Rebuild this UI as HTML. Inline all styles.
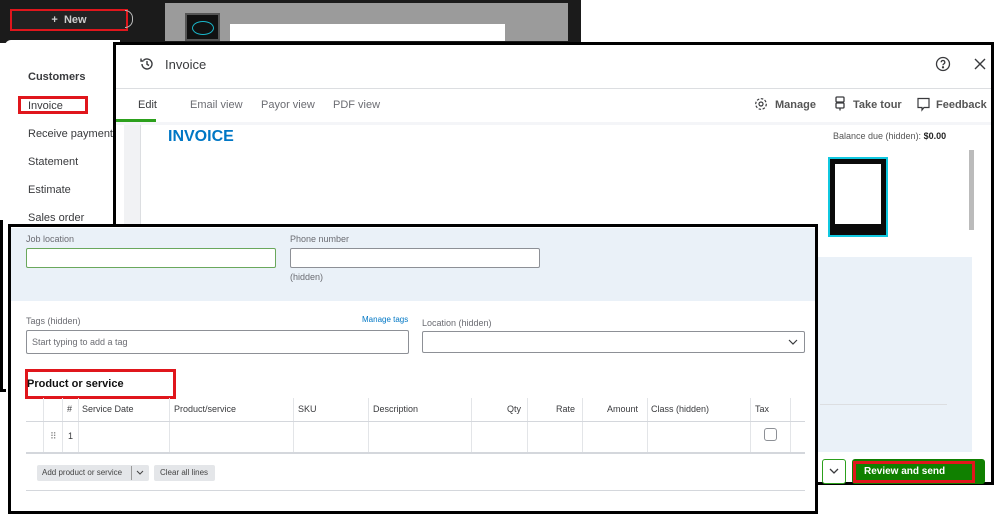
<!DOCTYPE html>
<html><head><style>
*{box-sizing:border-box;margin:0;padding:0}
body{width:999px;height:514px;position:relative;overflow:hidden;background:#fff;font-family:"Liberation Sans",sans-serif;color:#393a3d}
.a{position:absolute}
.lbl{font-size:9px;color:#6b6c72}
.inp{position:absolute;border:1px solid #8d9096;border-radius:2px;background:#fff}
.th{position:absolute;top:404px;font-size:9px;color:#393a3d}
.vl{position:absolute;width:1px;background:#e3e5e8}
</style></head><body>
<!-- top dark frame -->
<div class="a" style="left:0;top:0;width:581px;height:43px;background:#1b1b1b"></div>
<div class="a" style="left:165px;top:3px;width:403px;height:38px;background:#9b9b9b"></div>
<div class="a" style="left:185px;top:13px;width:35px;height:28px;background:#111;border:2px solid #555"><div class="a" style="left:5px;top:6px;width:22px;height:14px;border:1px solid #19b5c8;border-radius:50%"></div></div>
<div class="a" style="left:230px;top:24px;width:275px;height:17px;background:#fff"></div>
<div class="a" style="left:10px;top:9px;width:118px;height:22px;border:2px solid #e0161c;color:#ccc;font-size:11px;text-align:center;line-height:18px;font-weight:bold;background:#222">+&nbsp;&nbsp;New</div>
<div class="a" style="left:125px;top:10px;width:8px;height:18px;border:1px solid #bbb;border-left:none;border-radius:0 9px 9px 0"></div>
<!-- sidebar -->
<div class="a" style="left:5px;top:40px;width:115px;height:190px;background:#fff;border-radius:6px 0 0 0"></div>
<div class="a" style="left:0;top:220px;width:6px;height:172px;border-left:3px solid #000;border-bottom:3px solid #000"></div>
<div class="a" style="left:28px;top:71px;font-size:11px;font-weight:bold">Customers</div>
<div class="a" style="left:18px;top:96px;width:70px;height:18px;border:3px solid #e0161c"></div>
<div class="a" style="left:28px;top:100px;font-size:11px">Invoice</div>
<div class="a" style="left:28px;top:128px;font-size:11px">Receive payment</div>
<div class="a" style="left:28px;top:156px;font-size:11px">Statement</div>
<div class="a" style="left:28px;top:184px;font-size:11px">Estimate</div>
<div class="a" style="left:28px;top:212px;font-size:11px">Sales order</div>
<!-- modal -->
<div class="a" style="left:113px;top:42px;width:881px;height:443px;background:#fff;border:3px solid #000"></div>
<div class="a" style="left:116px;top:88px;width:875px;height:1px;background:#dcdee1"></div>
<svg class="a" style="left:139px;top:56px" width="16" height="16" viewBox="0 0 16 16" fill="none" stroke="#393a3d" stroke-width="1.4"><path d="M3 8a5 5 0 1 0 1.5-3.6M2 2.5v2.5h2.5M8 5v3.2l2 1.3"/></svg>
<div class="a" style="left:165px;top:57px;font-size:13px;color:#393a3d">Invoice</div>
<svg class="a" style="left:935px;top:56px" width="16" height="16" viewBox="0 0 16 16" fill="none" stroke="#393a3d" stroke-width="1.3"><circle cx="8" cy="8" r="6.5"/><path d="M6.2 6.3a1.8 1.8 0 1 1 2.6 1.6c-.6.3-.8.7-.8 1.3"/><circle cx="8" cy="11.3" r=".5" fill="#393a3d"/></svg>
<svg class="a" style="left:974px;top:58px" width="12" height="12" viewBox="0 0 12 12" stroke="#393a3d" stroke-width="1.4"><path d="M1 1l10 10M11 1L1 11"/></svg>
<div class="a" style="left:138px;top:99px;font-size:11px">Edit</div>
<div class="a" style="left:190px;top:99px;font-size:11px;color:#6b6c72">Email view</div>
<div class="a" style="left:261px;top:99px;font-size:11px;color:#6b6c72">Payor view</div>
<div class="a" style="left:333px;top:99px;font-size:11px;color:#6b6c72">PDF view</div>
<div class="a" style="left:116px;top:119px;width:40px;height:3px;background:#2ca01c"></div>
<div class="a" style="left:116px;top:122px;width:875px;height:3px;background:#f4f5f8"></div>
<svg class="a" style="left:754px;top:97px" width="14" height="14" viewBox="0 0 14 14" fill="none" stroke="#393a3d" stroke-width="1.2"><circle cx="7" cy="7" r="2"/><circle cx="7" cy="7" r="5.3" stroke-dasharray="2.5 1.6"/></svg>
<div class="a" style="left:775px;top:99px;font-size:11px;font-weight:bold;color:#555">Manage</div>
<svg class="a" style="left:834px;top:96px" width="12" height="15" viewBox="0 0 12 15" fill="none" stroke="#393a3d" stroke-width="1.3"><rect x="2" y="1" width="8" height="5" rx="1"/><rect x="2" y="7" width="8" height="5" rx="1"/><path d="M6 12v2.5"/></svg>
<div class="a" style="left:853px;top:99px;font-size:11px;font-weight:bold;color:#555">Take tour</div>
<svg class="a" style="left:916px;top:97px" width="15" height="15" viewBox="0 0 15 15" fill="none" stroke="#393a3d" stroke-width="1.2"><path d="M2 1.5h11v9H8l-2 2.5v-2.5H2z"/></svg>
<div class="a" style="left:936px;top:99px;font-size:11px;font-weight:bold;color:#555">Feedback</div>
<div class="a" style="left:124px;top:125px;width:17px;height:100px;background:#f1f2f4;border-right:1px solid #dcdee1"></div>
<div class="a" style="left:168px;top:128px;font-size:16px;font-weight:bold;color:#0077c5">INVOICE</div>
<div class="a" style="left:833px;top:131px;font-size:9px;color:#555">Balance due (hidden): <b style="color:#222">$0.00</b></div>
<div class="a" style="left:828px;top:157px;width:60px;height:80px;background:#0a0a0a;border:2px solid #10c8e0"><div class="a" style="left:5px;top:5px;width:46px;height:60px;background:#fff"></div></div>
<div class="a" style="left:969px;top:150px;width:5px;height:80px;background:#bbb"></div>
<div class="a" style="left:816px;top:257px;width:156px;height:195px;background:#eaf1f8"></div>
<div class="a" style="left:820px;top:404px;width:127px;height:1px;background:#dcdee1"></div>
<div class="a" style="left:822px;top:459px;width:24px;height:25px;border:1px solid #2ca01c;border-radius:3px;background:#fff"></div>
<svg class="a" style="left:829px;top:468px" width="10" height="7" viewBox="0 0 10 7" fill="none" stroke="#393a3d" stroke-width="1.3"><path d="M1 1l4 4 4-4"/></svg>
<div class="a" style="left:852px;top:459px;width:133px;height:25px;background:#108000;border-radius:3px"></div>
<div class="a" style="left:853px;top:461px;width:122px;height:22px;border:3px solid #e0161c"></div>
<div class="a" style="left:864px;top:466px;font-size:10px;font-weight:bold;color:#fff">Review and send</div>
<!-- inner box -->
<div class="a" style="left:8px;top:224px;width:810px;height:290px;background:#fff;border:3px solid #000"></div>
<div class="a" style="left:11px;top:228px;width:804px;height:73px;background:#eaf1f8"></div>
<div class="a lbl" style="left:26px;top:234px">Job location</div>
<div class="inp" style="left:26px;top:248px;width:250px;height:20px;border-color:#6aa85c"></div>
<div class="a lbl" style="left:290px;top:234px">Phone number</div>
<div class="inp" style="left:290px;top:248px;width:250px;height:20px"></div>
<div class="a lbl" style="left:290px;top:272px">(hidden)</div>
<div class="a lbl" style="left:26px;top:316px">Tags (hidden)</div>
<div class="a" style="left:362px;top:315px;font-size:8px;color:#0077c5">Manage tags</div>
<div class="inp" style="left:26px;top:330px;width:383px;height:24px"></div>
<div class="a lbl" style="left:32px;top:337px">Start typing to add a tag</div>
<div class="a lbl" style="left:422px;top:318px">Location (hidden)</div>
<div class="inp" style="left:422px;top:331px;width:383px;height:22px"></div>
<svg class="a" style="left:788px;top:339px" width="10" height="7" viewBox="0 0 10 7" fill="none" stroke="#393a3d" stroke-width="1.2"><path d="M1 1l4 4 4-4"/></svg>
<div class="a" style="left:25px;top:369px;width:151px;height:30px;border:3px solid #e0161c"></div>
<div class="a" style="left:27px;top:378px;font-size:11px;font-weight:bold;color:#111">Product or service</div>
<div class="vl" style="left:43px;top:398px;height:55px"></div>
<div class="vl" style="left:62px;top:398px;height:55px"></div>
<div class="vl" style="left:78px;top:398px;height:55px"></div>
<div class="vl" style="left:169px;top:398px;height:55px"></div>
<div class="vl" style="left:293px;top:398px;height:55px"></div>
<div class="vl" style="left:368px;top:398px;height:55px"></div>
<div class="vl" style="left:471px;top:398px;height:55px"></div>
<div class="vl" style="left:527px;top:398px;height:55px"></div>
<div class="vl" style="left:582px;top:398px;height:55px"></div>
<div class="vl" style="left:647px;top:398px;height:55px"></div>
<div class="vl" style="left:750px;top:398px;height:55px"></div>
<div class="vl" style="left:790px;top:398px;height:55px"></div>
<div class="th" style="left:67px">#</div>
<div class="th" style="left:82px">Service Date</div>
<div class="th" style="left:174px">Product/service</div>
<div class="th" style="left:298px">SKU</div>
<div class="th" style="left:373px">Description</div>
<div class="th" style="left:507px">Qty</div>
<div class="th" style="left:556px">Rate</div>
<div class="th" style="left:607px">Amount</div>
<div class="th" style="left:651px">Class (hidden)</div>
<div class="th" style="left:755px">Tax</div>
<div class="a" style="left:26px;top:421px;width:779px;height:1px;background:#d4d7dc"></div>
<div class="a" style="left:50px;top:431px;font-size:9px;color:#888">⠿</div>
<div class="a" style="left:68px;top:431px;font-size:9px">1</div>
<div class="a" style="left:764px;top:428px;width:13px;height:13px;border:1px solid #8d9096;border-radius:3px"></div>
<div class="a" style="left:26px;top:452px;width:779px;height:2px;background:#d4d7dc"></div>
<div class="a" style="left:37px;top:465px;width:112px;height:16px;background:#e4e6e9;border-radius:2px"></div>
<div class="a" style="left:42px;top:468px;font-size:8px;color:#444">Add product or service</div>
<div class="a" style="left:131px;top:466px;width:1px;height:14px;background:#999"></div>
<svg class="a" style="left:136px;top:470px" width="8" height="6" viewBox="0 0 8 6" fill="none" stroke="#444" stroke-width="1"><path d="M1 1l3 3 3-3"/></svg>
<div class="a" style="left:154px;top:465px;width:61px;height:16px;background:#e4e6e9;border-radius:2px"></div>
<div class="a" style="left:160px;top:468px;font-size:8px;color:#444">Clear all lines</div>
<div class="a" style="left:26px;top:490px;width:779px;height:1px;background:#d4d7dc"></div>
</body></html>
